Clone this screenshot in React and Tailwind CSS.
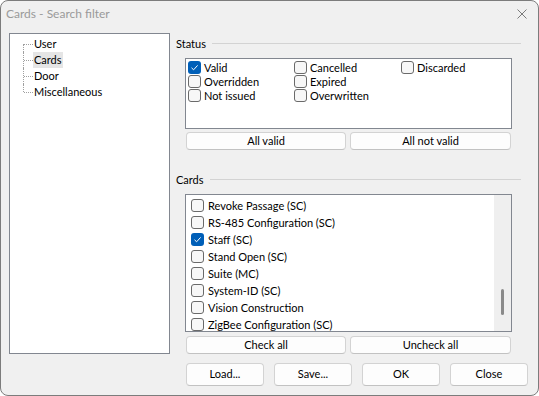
import React from "react";

const font = { fontFamily: "Lato, 'Liberation Sans', sans-serif" };

const statusItems = [
  [{ label: "Valid", checked: true }, { label: "Cancelled" }, { label: "Discarded" }],
  [{ label: "Overridden" }, { label: "Expired" }, null],
  [{ label: "Not issued" }, { label: "Overwritten" }, null],
];

const cardItems = [
  { label: "Revoke Passage (SC)" },
  { label: "RS-485 Configuration (SC)" },
  { label: "Staff (SC)", checked: true },
  { label: "Stand Open (SC)" },
  { label: "Suite (MC)" },
  { label: "System-ID (SC)" },
  { label: "Vision Construction" },
  { label: "ZigBee Configuration (SC)" },
];

const treeItems = ["User", "Cards", "Door", "Miscellaneous"];

const CheckBox = ({ checked }) =>
  checked ? (
    <span className="w-[13px] h-[13px] rounded-[3px] bg-[#005fb8] flex items-center justify-center flex-shrink-0">
      <svg width="13" height="13" viewBox="0 0 13 13">
        <path d="M3.5 6.8 L5.6 8.8 L9.6 4.4" fill="none" stroke="#ffffff" strokeWidth="1" />
      </svg>
    </span>
  ) : (
    <span className="w-[13px] h-[13px] rounded-[3px] border border-[#6a6a6a] bg-[#f7f7f7] flex-shrink-0" />
  );

const Button = ({ children, className = "" }) => (
  <button
    className={`bg-[#fdfdfd] border border-[#d3d3d3] border-b-[#c2c2c2] rounded-[4px] text-[11px] text-black flex items-center justify-center ${className}`}
  >
    {children}
  </button>
);

const GroupLabel = ({ text, className = "" }) => (
  <div className={`flex items-center h-[16px] gap-[6px] ${className}`}>
    <span className="text-[11px] text-black leading-none">{text}</span>
    <div className="flex-1 h-px bg-[#d3d3d3]" />
  </div>
);

const TreeRow = ({ text, index, last, selected }) => (
  <div className="flex items-center h-[16px]">
    <div className="w-[10px] h-full ml-[13px] relative flex-shrink-0">
      <div
        className={`absolute left-0 w-0 border-l border-dotted border-[#a0a0a0] ${
          index === 0 ? "top-[8px] bottom-0" : last ? "top-0 h-[8px]" : "top-0 bottom-0"
        }`}
      />
      <div className="absolute left-[1px] top-[8px] w-[9px] h-0 border-t border-dotted border-[#a0a0a0]" />
    </div>
    <span
      className={`text-[11px] text-black h-full flex items-center px-[1px] ${
        selected ? "bg-[#e5e5e5]" : ""
      }`}
    >
      {text}
    </span>
  </div>
);

export default function App() {
  return (
    <div
      style={font}
      className="w-[539px] h-[396px] bg-[#f0f0f0] border border-[#7c7c7c] rounded-[8px] overflow-hidden flex flex-col"
    >
      {/* Title bar */}
      <div className="h-[26px] flex items-center justify-between pl-[5px] pr-[11px]">
        <span className="text-[12px] text-[#9a9a9a]">Cards - Search filter</span>
        <svg width="10" height="10" viewBox="0 0 10 10">
          <path d="M0.5 0.5 L9.5 9.5 M9.5 0.5 L0.5 9.5" stroke="#7a7a7a" strokeWidth="1" />
        </svg>
      </div>

      {/* Body */}
      <div className="flex flex-col pt-[6px] pl-[8px] pr-[8px]">
        <div className="flex">
          {/* Tree */}
          <div className="w-[161px] h-[321px] bg-white border border-[#828790] pt-[2px]">
            {treeItems.map((t, i) => (
              <TreeRow
                key={t}
                text={t}
                index={i}
                last={i === treeItems.length - 1}
                selected={t === "Cards"}
              />
            ))}
          </div>

          {/* Right column */}
          <div className="ml-[6px] w-[345px] flex flex-col">
            <GroupLabel text="Status" className="mt-[2px]" />
            <div className="ml-[9px] mt-[7px] w-[327px] h-[71px] bg-white border border-[#828790] pt-[1px] pl-[2px]">
              {statusItems.map((row, r) => (
                <div key={r} className="grid grid-cols-[106px_107px_1fr] h-[14px]">
                  {row.map((item, c) =>
                    item ? (
                      <div key={c} className="flex items-center gap-[3px]">
                        <CheckBox checked={item.checked} />
                        <span className="text-[11px] text-black leading-none">{item.label}</span>
                      </div>
                    ) : (
                      <div key={c} />
                    )
                  )}
                </div>
              ))}
            </div>
            <div className="flex ml-[10px] mt-[3px] gap-[4px]">
              <Button className="w-[160px] h-[18px]">All valid</Button>
              <Button className="w-[161px] h-[18px]">All not valid</Button>
            </div>

            <GroupLabel text="Cards" className="mt-[21px]" />
            <div className="ml-[9px] mt-[7px] w-[327px] h-[138px] bg-white border border-[#828790] flex">
              <div className="flex-1 pt-[2px] pl-[5px]">
                {cardItems.map((item) => (
                  <div key={item.label} className="flex items-center gap-[4px] h-[17px]">
                    <CheckBox checked={item.checked} />
                    <span className="text-[11px] text-black leading-none">{item.label}</span>
                  </div>
                ))}
              </div>
              <div className="w-[17px] bg-[#efefef] flex justify-center pt-[94px]">
                <div className="w-[3px] h-[26px] rounded-full bg-[#8a8a8a]" />
              </div>
            </div>
            <div className="flex ml-[10px] mt-[4px] gap-[4px]">
              <Button className="w-[160px] h-[18px]">Check all</Button>
              <Button className="w-[161px] h-[18px]">Uncheck all</Button>
            </div>
          </div>
        </div>

        {/* Bottom buttons */}
        <div className="flex justify-end gap-[10px] mt-[9px] pr-[2px]">
          <Button className="w-[78px] h-[23px]">Load...</Button>
          <Button className="w-[78px] h-[23px]">Save...</Button>
          <Button className="w-[78px] h-[23px]">OK</Button>
          <Button className="w-[78px] h-[23px]">Close</Button>
        </div>
      </div>
    </div>
  );
}
